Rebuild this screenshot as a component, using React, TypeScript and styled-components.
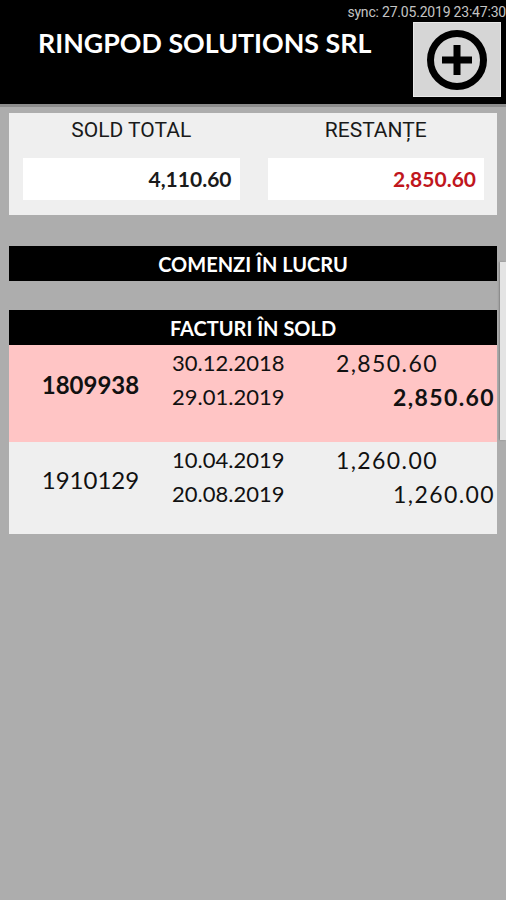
import React from "react";
import { styled, createGlobalStyle } from "styled-components";

type Invoice = {
  number: string;
  issued: string;
  due: string;
  amount: string;
  rest: string;
  overdue: boolean;
};

const invoices: Invoice[] = [
  {
    number: "1809938",
    issued: "30.12.2018",
    due: "29.01.2019",
    amount: "2,850.60",
    rest: "2,850.60",
    overdue: true,
  },
  {
    number: "1910129",
    issued: "10.04.2019",
    due: "20.08.2019",
    amount: "1,260.00",
    rest: "1,260.00",
    overdue: false,
  },
];

const PlusIcon = () => (
  <svg width="64" height="64" viewBox="0 0 64 64">
    <circle cx="32" cy="32" r="26.5" fill="none" stroke="#000" strokeWidth="7" />
    <rect x="17" y="28.5" width="30" height="7" fill="#000" />
    <rect x="28.5" y="17" width="7" height="30" fill="#000" />
  </svg>
);

const App = () => {
  return (
    <>
      <GlobalStyle />
      <Page>
        <Header>
          <Sync>sync: 27.05.2019 23:47:30</Sync>
          <TopRow>
            <Title>RINGPOD SOLUTIONS SRL</Title>
            <AddButton type="button">
              <PlusIcon />
            </AddButton>
          </TopRow>
        </Header>

        <Main>
          <Summary>
            <Label>SOLD TOTAL</Label>
            <Label>RESTANȚE</Label>
            <Value>4,110.60</Value>
            <Value $danger>2,850.60</Value>
          </Summary>

          <SectionTitle $top={31}>COMENZI ÎN LUCRU</SectionTitle>

          <Invoices>
            <SectionTitle $top={0}>FACTURI ÎN SOLD</SectionTitle>
            {invoices.map((inv) => (
              <InvoiceRow key={inv.number} $overdue={inv.overdue}>
                <InvoiceNo $overdue={inv.overdue}>{inv.number}</InvoiceNo>
                <Dates>
                  <div>{inv.issued}</div>
                  <div>{inv.due}</div>
                </Dates>
                <Amounts>
                  <div>{inv.amount}</div>
                  <Rest $overdue={inv.overdue}>{inv.rest}</Rest>
                </Amounts>
              </InvoiceRow>
            ))}
          </Invoices>
        </Main>

        <ScrollThumb />
      </Page>
    </>
  );
};

const GlobalStyle = createGlobalStyle`
  html, body {
    margin: 0;
    padding: 0;
    background: #adadad;
  }
  body {
    font-family: Lato, "Open Sans", sans-serif;
    color: #111;
  }
`;

const Page = styled.div`
  position: relative;
  width: 506px;
  min-height: 900px;
  background: #adadad;
  overflow: hidden;
`;

const Header = styled.header`
  height: 104px;
  background: #000;
  border-bottom: 3px solid #8c8c8c;
  box-sizing: content-box;
`;

const Sync = styled.div`
  height: 22px;
  text-align: right;
  font-family: Roboto, sans-serif;
  font-size: 14px;
  line-height: 24px;
  letter-spacing: -0.2px;
  color: #c4c4c4;
`;

const TopRow = styled.div`
  display: flex;
  justify-content: space-between;
  align-items: flex-start;
  padding: 0 5px 0 38px;
`;

const Title = styled.h1`
  margin: 6px 0 0;
  font-family: Lato, sans-serif;
  font-weight: 700;
  font-size: 26.8px;
  line-height: 30px;
  color: #fff;
`;

const AddButton = styled.button`
  display: flex;
  align-items: center;
  justify-content: center;
  width: 88px;
  height: 75px;
  padding: 0;
  border: 1px solid #e8e8e8;
  background: #d6d6d6;
  cursor: pointer;
`;

const Main = styled.main`
  padding: 6px 9px 0;
`;

const Summary = styled.section`
  display: grid;
  grid-template-columns: 1fr 1fr;
  column-gap: 28px;
  padding: 0 13px 15px 14px;
  background: #efefef;
`;

const Label = styled.div`
  margin-bottom: 11px;
  text-align: center;
  font-family: Roboto, sans-serif;
  font-size: 21px;
  line-height: 34px;
  color: #1a1a1a;
`;

const Value = styled.div<{ $danger?: boolean }>`
  height: 42px;
  padding-right: 8px;
  background: #fff;
  text-align: right;
  font-family: Lato, sans-serif;
  font-weight: 700;
  font-size: 21px;
  line-height: 42px;
  color: ${(p) => (p.$danger ? "#c0161d" : "#1a1a1a")};
`;

const SectionTitle = styled.h2<{ $top: number }>`
  margin: ${(p) => p.$top}px 0 0;
  height: 35px;
  background: #000;
  text-align: center;
  font-family: Lato, sans-serif;
  font-weight: 700;
  font-size: 20px;
  line-height: 36px;
  color: #fff;
`;

const Invoices = styled.section`
  margin-top: 29px;
`;

const InvoiceRow = styled.div<{ $overdue: boolean }>`
  display: grid;
  grid-template-columns: 163px 164px 1fr;
  height: 97px;
  padding-top: 1px;
  box-sizing: border-box;
  background: ${(p) => (p.$overdue ? "#ffc5c5" : "#efefef")};

  &:last-child {
    height: 92px;
  }
`;

const InvoiceNo = styled.div<{ $overdue: boolean }>`
  height: 70px;
  display: flex;
  align-items: center;
  justify-content: center;
  padding-top: ${(p) => (p.$overdue ? 6 : 2)}px;
  box-sizing: border-box;
  font-size: 24px;
  font-weight: ${(p) => (p.$overdue ? 700 : 400)};
`;

const Dates = styled.div`
  font-size: 22px;
  line-height: 34px;
`;

const Amounts = styled.div`
  font-size: 23px;
  line-height: 34px;
  letter-spacing: 1.4px;
`;

const Rest = styled.div<{ $overdue: boolean }>`
  padding-right: 2px;
  text-align: right;
  font-weight: ${(p) => (p.$overdue ? 700 : 400)};
`;

const ScrollThumb = styled.div`
  position: absolute;
  top: 262px;
  right: 0;
  width: 6px;
  height: 178px;
  background: #e4e4e4;
  box-shadow: -1px 0 2px rgba(0, 0, 0, 0.25);
`;

export default App;
